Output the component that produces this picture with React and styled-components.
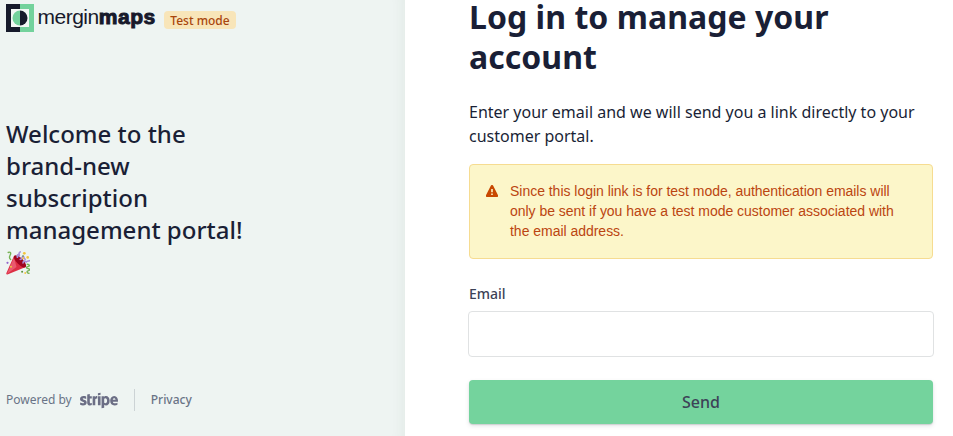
import React from "react";
import styled, { createGlobalStyle } from "styled-components";
import { FaStripe } from "react-icons/fa";

const GlobalStyle = createGlobalStyle`
  *, *::before, *::after { box-sizing: border-box; }
  body {
    margin: 0;
    background: #fff;
    color: #1a1f36;
    font-family: "Noto Sans", sans-serif;
  }
  h1, h2, p { margin: 0; }
`;

const Page = styled.div`
  display: grid;
  grid-template-columns: 405px 1fr;
  height: 436px;
`;

const Sidebar = styled.aside`
  display: flex;
  flex-direction: column;
  padding: 4px 6px 25px;
  background: #eef4f2;
  box-shadow: inset -14px 0 14px -12px rgba(26, 60, 50, 0.06);
`;

const Brand = styled.header`
  display: flex;
  height: 28px;
`;

const LogoMark = styled.svg`
  display: block;
  width: 28px;
  height: 28px;
`;

const Wordmark = styled.span`
  width: 119px;
  margin-left: 3.5px;
  font: 400 21px/25px "Liberation Sans", Arial, sans-serif;
  letter-spacing: -0.5px;
  color: #17192b;
  white-space: nowrap;

  b {
    font-weight: 700;
    letter-spacing: 0.55px;
    -webkit-text-stroke: 1px currentColor;
  }
`;

const Badge = styled.span`
  width: 72px;
  height: 18px;
  margin: 7px 0 0 7.5px;
  border-radius: 4px;
  background: #f8e5b9;
  color: #a8450c;
  font-size: 12px;
  font-weight: 500;
  line-height: 19px;
  text-align: center;
`;

const Welcome = styled.h2`
  width: 245px;
  margin-top: 86px;
  font-size: 24px;
  font-weight: 500;
  line-height: 32px;
`;

const PartyPopper = styled.svg`
  width: 24px;
  height: 24px;
  vertical-align: -4px;
`;

const Footer = styled.footer`
  display: flex;
  align-items: center;
  height: 22px;
  margin-top: auto;
  color: #697386;
  font-size: 12px;
  line-height: 20px;
`;

const StripeLogo = styled(FaStripe)`
  width: 38px;
  height: 31px;
  margin: 0 1px 0 8px;
  color: #6b6e85;
`;

const FooterLink = styled.span`
  display: flex;
  align-items: center;
  height: 22px;
  margin-left: 15px;
  padding-left: 16px;
  border-left: 1px solid #ccd3d5;
  font-weight: 500;
`;

const Main = styled.main`
  display: flex;
  flex-direction: column;
  width: 528px;
  padding: 0 0 0 64px;
`;

const Title = styled.h1`
  margin-top: -3px;
  font-size: 32px;
  font-weight: 700;
  letter-spacing: 0.04px;
  line-height: 40px;
`;

const Intro = styled.p`
  margin-top: 23px;
  font-size: 16px;
  line-height: 24px;
`;

const Notice = styled.div`
  display: flex;
  height: 95px;
  margin-top: 16px;
  padding: 16px;
  border: 1px solid #f6dc91;
  border-radius: 4px;
  background: #fcf6c9;
  color: #bb4510;
  font: 14px/20px "Liberation Sans", Arial, sans-serif;
  letter-spacing: -0.025px;
`;

const WarningIcon = styled.svg`
  flex: none;
  width: 12px;
  height: 12px;
  margin: 4px 12px 0 0;
`;

const Label = styled.label`
  margin-top: 25px;
  color: #3c4257;
  font-size: 14px;
  font-weight: 500;
  line-height: 20px;
`;

const Input = styled.input`
  width: 466px;
  height: 46px;
  margin: 7px 0 0 -1px;
  padding: 8px 12px;
  border: 1px solid #e0e2e3;
  border-radius: 4px;
  background: #fff;
  font: 16px/28px "Noto Sans", sans-serif;
`;

const SendButton = styled.button`
  height: 44px;
  margin-top: 23px;
  padding: 0;
  border: 0;
  border-radius: 4px;
  background: #74d39d;
  box-shadow: 0 2px 4px rgba(60, 66, 87, 0.15), 0 1px 1px rgba(0, 0, 0, 0.12);
  color: #3c4257;
  font: 500 16px/44px "Noto Sans", sans-serif;
`;

export default function App() {
  return (
    <>
      <GlobalStyle />
      <Page>
        <Sidebar>
          <Brand>
            <LogoMark viewBox="0 0 28 28" aria-hidden="true">
              <path d="M0 0h14v28H0z" fill="#161a2b" />
              <path d="M14 0h14v28H14z" fill="#73d29c" />
              <path d="M5 5h18v18H5z" fill="#f2f7f4" />
              <path d="M14 6.5a7.5 7.5 0 0 0 0 15z" fill="#73d29c" />
              <path d="M14 6.5a7.5 7.5 0 0 1 0 15z" fill="#161a2b" />
            </LogoMark>
            <Wordmark>mergin<b>maps</b></Wordmark>
            <Badge>Test mode</Badge>
          </Brand>
          <Welcome>
            Welcome to the brand-new subscription management portal!{" "}
            <PartyPopper viewBox="0 0 24 24" role="img" aria-label="🎉">
              <path d="M8.2 4.6 19.8 16 1.4 23.4Q0 23.7.3 22.3z" fill="#dd2e44" />
              <path d="M8 6.4 10.5 16 1 23z" fill="#ea596e" />
              <ellipse cx="14" cy="10.3" rx="3.2" ry="8" transform="rotate(-45 14 10.3)" fill="#a0041e" />
              <g fill="none" strokeLinecap="round">
                <path d="M2.2 1.5C4.5.4 5.2 2.2 4.2 4S3 7.2 4.6 8.5" stroke="#77b255" strokeWidth="1.4" />
                <path d="M21.2 13.2c3 .3 2.5 2.2.4 2.4-1.6.3-1.5 2 .4 2 2 .2 2 2 .1 2.3-1.8.3-1 2.5.9 2.3" stroke="#77b255" strokeWidth="1.4" />
                <path d="M11.4 6.3c-.7-3 1-3.2 1.8-1.5C14 3.5 11.5 2.8 14.2.9M14.2 8.5c2.5-.2 1.2-3 3-3.2 1.3 0 .2 3 2.2 3M17 12c.2-2.3 2-2.4 3.1-1 1.2-1.3 1.9-.8 3.2-1.3" stroke="#aa8dd8" strokeWidth="1.6" />
              </g>
              <g fill="#f4c43d">
                <circle cx="18.3" cy="2.3" r="1.4" />
                <circle cx="21.7" cy="6.4" r="1.3" />
                <circle cx="17.1" cy="7.2" r="1" />
                <circle cx="5" cy="15.7" r="1" />
                <circle cx="19.2" cy="22" r=".9" />
              </g>
              <circle cx="1.5" cy="11.8" r="1.1" fill="#9266cc" />
              <circle cx="16.1" cy="20.7" r="1" fill="#5c913b" />
              <circle cx="17" cy="5" r=".8" fill="#5c913b" />
            </PartyPopper>
          </Welcome>
          <Footer>
            <span>Powered by</span>
            <StripeLogo aria-label="stripe" />
            <FooterLink>Privacy</FooterLink>
          </Footer>
        </Sidebar>
        <Main>
          <Title>Log in to manage your account</Title>
          <Intro>Enter your email and we will send you a link directly to your customer portal.</Intro>
          <Notice>
            <WarningIcon viewBox="0 0 12 12" aria-hidden="true">
              <path d="M4.8.7a1.35 1.35 0 0 1 2.4 0l4.7 9.3a1.2 1.2 0 0 1-1.2 2H1.3A1.2 1.2 0 0 1 .1 10z" fill="#c84801" />
              <path d="M5.2 4h1.6v3.3H5.2zM5.2 8.4h1.6V10H5.2z" fill="#fcf6c9" />
            </WarningIcon>
            <p>
              Since this login link is for test mode, authentication emails will only be sent if you
              have a test mode customer associated with the email address.
            </p>
          </Notice>
          <Label htmlFor="email">Email</Label>
          <Input id="email" type="email" />
          <SendButton type="button">Send</SendButton>
        </Main>
      </Page>
    </>
  );
}
